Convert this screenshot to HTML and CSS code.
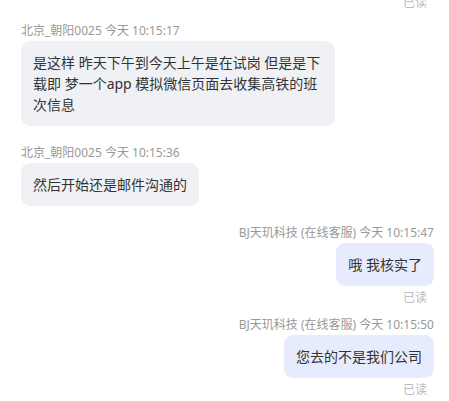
FILE: index.html
```html
<!DOCTYPE html>
<html lang="zh-CN">
<head>
    <meta charset="UTF-8">
    <meta name="viewport" content="width=device-width, initial-scale=1.0">
    <title>在线客服</title>
    <link rel="stylesheet" href="styles.css">
</head>
<body>
    <div class="chat-list">
        <!-- 上一条的已读 -->
        <div class="message mine top-cut">
            <div class="read-tag">已读</div>
        </div>

        <div class="message">
            <div class="meta">北京_朝阳0025 今天 10:15:17</div>
            <div class="bubble">是这样 昨天下午到今天上午是在试岗 但是是下载即 梦一个app 模拟微信页面去收集高铁的班次信息</div>
        </div>

        <div class="message">
            <div class="meta">北京_朝阳0025 今天 10:15:36</div>
            <div class="bubble">然后开始还是邮件沟通的</div>
        </div>

        <div class="message mine">
            <div class="meta">BJ天玑科技 (在线客服) 今天 10:15:47</div>
            <div class="bubble">哦 我核实了</div>
            <div class="read-tag">已读</div>
        </div>

        <div class="message mine">
            <div class="meta">BJ天玑科技 (在线客服) 今天 10:15:50</div>
            <div class="bubble">您去的不是我们公司</div>
            <div class="read-tag">已读</div>
        </div>
    </div>
</body>
</html>
```

FILE: styles.css
```css
body {
    margin: 0;
    background: #fff;
    font-family: 'Noto Sans', 'Noto Sans CJK SC', sans-serif;
    color: #333;
    overflow: hidden;
}

.chat-list {
    display: flex;
    flex-direction: column;
    padding: 0 15px 0 21px;
    margin-top: -9px;
}

.message {
    display: flex;
    flex-direction: column;
    align-items: flex-start;
    margin-bottom: 19px;
}

.message.mine {
    align-items: flex-end;
    margin-bottom: 11px;
}

.message.top-cut {
    margin-bottom: 12px;
}

.meta {
    font-size: 12px;
    line-height: 16px;
    color: #999;
    margin-bottom: 2px;
    white-space: nowrap;
}

.bubble {
    max-width: 76%;
    box-sizing: border-box;
    padding: 11px 12px;
    font-size: 14px;
    line-height: 21px;
    border-radius: 9px;
    background: #f0f1f5;
    word-break: break-all;
}

.mine .bubble {
    background: #e6ecfd;
}

.read-tag {
    font-size: 12px;
    line-height: 16px;
    color: #bbb;
    margin-top: 4px;
    margin-right: 7px;
}
```
